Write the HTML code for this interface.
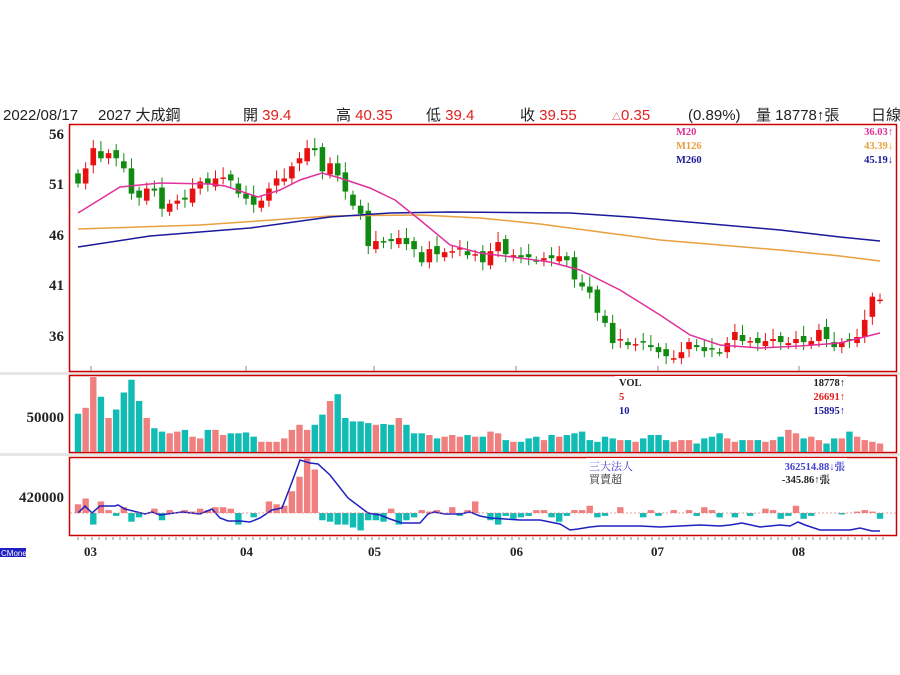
<!DOCTYPE html>
<html><head><meta charset="utf-8"><style>
body{margin:0;width:900px;height:675px;background:#fff;overflow:hidden;font-family:"Liberation Sans","Noto Sans CJK TC",sans-serif;}
svg{position:absolute;left:0;top:0}
.s{font-family:"Liberation Serif","Noto Serif CJK SC",serif;font-weight:bold}
</style></head><body>
<svg id="c" width="900" height="675" xmlns="http://www.w3.org/2000/svg">
<rect x="0" y="372" width="900" height="3" fill="#e6e6e6"/>
<rect x="0" y="453" width="900" height="3" fill="#e6e6e6"/>
<g font-size="15" fill="#222">
<text x="3" y="120">2022/08/17</text>
<text x="98" y="120">2027 大成鋼</text>
<text x="243" y="120">開 <tspan fill="#e02020">39.4</tspan></text>
<text x="336" y="120">高 <tspan fill="#e02020">40.35</tspan></text>
<text x="426" y="120">低 <tspan fill="#e02020">39.4</tspan></text>
<text x="520" y="120">收 <tspan fill="#e02020">39.55</tspan></text>
<text x="612" y="120" fill="#e02020"><tspan font-size="9">△</tspan>0.35</text>
<text x="688" y="120">(0.89%)</text>
<text x="756" y="120">量 18778↑張</text>
<text x="871" y="120">日線</text>
</g>
<rect x="69.5" y="124.5" width="827" height="247" fill="none" stroke="#c00" stroke-width="1.5"/>
<rect x="69.5" y="375.5" width="827" height="77" fill="none" stroke="#c00" stroke-width="1.5"/>
<rect x="69.5" y="457.5" width="827" height="78" fill="none" stroke="#c00" stroke-width="1.5"/>
<g class="s" font-size="15" fill="#222" text-anchor="end">
<text x="64" y="139">56</text><text x="64" y="189">51</text><text x="64" y="240">46</text><text x="64" y="290">41</text><text x="64" y="341">36</text>
<text x="64" y="422">50000</text><text x="64" y="502">420000</text>
</g>
<g class="s" font-size="13" fill="#222">
<text x="84" y="556">03</text><text x="240" y="556">04</text><text x="368" y="556">05</text><text x="510" y="556">06</text><text x="651" y="556">07</text><text x="792" y="556">08</text>
</g>
<rect x="0" y="548" width="26" height="9" fill="#2020c0"/><text x="1" y="556" font-size="8" fill="#fff">CMoney</text>
<g id="g"></g>
<polyline fill="none" stroke="#e8a040" stroke-width="1.5" points="78,229 200,225 330,216 420,215 480,218 540,224 600,232 660,240 720,245 780,250 840,256 880,261"/>
<polyline fill="none" stroke="#1a1a9a" stroke-width="1.5" points="78,247 150,236 250,228 330,217 390,213 450,212 570,213 630,217 700,223 780,230 840,237 880,241"/>
<polyline fill="none" stroke="#e0309a" stroke-width="1.5" points="78,213 120,187 160,183 210,184 225,186 258,197 280,190 300,180 322,173 340,178 370,188 395,200 420,220 450,245 480,253 520,258 550,262 580,270 620,290 660,315 690,335 720,345 760,348 800,346 840,343 860,338 880,333"/>
<polyline fill="none" stroke="#2020c0" stroke-width="1.5" points="78,513 85,506 92,513 100,506 115,506 118,505 125,509 145,514 152,512 160,515 182,512 200,514 212,509 220,518 228,521 240,521 250,522 260,518 272,510 282,508 292,482 300,460 310,463 318,464 330,475 348,498 368,513 380,515 390,519 402,523 420,523 428,514 434,512 445,514 460,514 470,512 480,516 490,518 520,520 540,520 560,524 570,530 578,529 590,527 600,526 615,526 630,526 640,526 660,527 680,526 700,525 720,526 730,525 742,523 760,527 780,525 790,526 798,522 805,525 820,530 840,530 850,530 860,528 872,531 880,531"/>
<line x1="70" y1="513" x2="896" y2="513" stroke="#e08080" stroke-width="0.7" stroke-dasharray="2,2"/>
<g class="s" font-size="10.5">
<rect x="673" y="126" width="222" height="40" fill="#fff" opacity="0.95"/>
<text x="676" y="135" fill="#e0309a">M20</text><text x="893" y="135" fill="#e0309a" text-anchor="end">36.03↑</text>
<text x="676" y="149" fill="#e8a040">M126</text><text x="893" y="149" fill="#e8a040" text-anchor="end">43.39↓</text>
<text x="676" y="163" fill="#1a1a9a">M260</text><text x="893" y="163" fill="#1a1a9a" text-anchor="end">45.19↓</text>
<rect x="615" y="376" width="232" height="42" fill="#fff" opacity="0.95"/>
<text x="619" y="386" fill="#222">VOL</text><text x="845" y="386" fill="#222" text-anchor="end">18778↑</text>
<text x="619" y="400" fill="#e02020">5</text><text x="845" y="400" fill="#e02020" text-anchor="end">26691↑</text>
<text x="619" y="414" fill="#1a1a9a">10</text><text x="845" y="414" fill="#1a1a9a" text-anchor="end">15895↑</text>
<rect x="586" y="458" width="261" height="28" fill="#fff" opacity="0.95"/>
<text x="589" y="470" fill="#4040d0" font-weight="normal" font-size="11">三大法人</text><text x="845" y="470" fill="#4040d0" text-anchor="end">362514.88↓張</text>
<text x="589" y="483" fill="#222" font-weight="normal" font-size="11">買賣超</text><text x="830" y="483" fill="#222" text-anchor="end">-345.86↑張</text>
</g>
</svg>
<script>
var C=[51,52.5,54.5,53.5,54,53.5,52.5,50,49.6,50.5,50.3,48.5,49,49.3,49.4,50.5,51.2,51,51.5,51.6,51.3,50,49.5,48.9,49.3,50.5,51.5,51.5,52.7,53.5,54.5,54.3,52.2,53,51.8,50.2,48.8,48,44.8,45.3,45.2,45.3,45.6,45,44.5,43.2,44.5,44,44.2,44.3,44.6,43.9,44,43.2,44.3,45.2,44,43.9,43.7,43.7,43.4,43.6,43.6,43.8,43.4,41.5,40.8,40.2,38.2,37.2,35.2,35.6,35,35.1,35.3,34.8,34.3,33.9,33.7,34.3,35.3,34.8,34.4,34.6,34.3,35.2,36.3,35.4,35.4,35.2,35.4,35.6,35.3,35.2,35.6,35.3,35.4,36.5,35.6,34.8,35.3,35.5,35.8,37.5,39.8,39.5];
var n=C.length,x0=78,dx=(880-x0)/(n-1),g='';
function Y(p){return 133+(56-p)*10.1}
var V=[45,52,90,65,40,50,70,85,60,40,28,24,22,24,26,18,16,26,26,20,22,22,23,18,12,12,12,16,26,32,26,32,44,60,68,40,36,36,34,32,33,32,40,32,22,22,20,16,18,20,18,20,18,18,24,22,14,12,12,16,18,14,20,18,20,22,24,14,12,18,16,14,14,12,16,20,20,14,12,14,14,10,16,18,22,16,12,14,14,14,12,14,18,26,22,16,18,14,10,16,16,24,18,14,12,10,12,10,12,12,14,48,42,16,18];
var I=[6,10,-8,8,2,-2,4,-6,-3,0,3,-5,2,0,2,1,3,2,4,4,3,-8,0,-3,0,8,6,5,15,25,38,30,-5,-6,-8,-8,-10,-12,-5,-5,-6,3,-8,-5,-3,2,1,2,0,4,-2,2,8,0,-5,-8,-2,-4,-3,-2,2,2,-3,-6,-2,2,2,5,-3,-2,0,4,0,0,-3,2,-2,0,2,0,2,-2,4,2,-3,0,-3,0,-2,0,3,2,-4,-2,5,-4,-2,0,0,0,-1,0,1,2,1,-4,-2,0,0,0,0,0];
for(var i=0;i<n;i++){var c=C[i],o=i?C[i-1]+(i%3-1)*0.3:c+1;var up=c>=o;var x=x0+i*dx;
var hi=Math.max(o,c)+0.4+(i%4)*0.2,lo=Math.min(o,c)-0.4-(i%3)*0.2;
var col=up?'#e81010':'#108a10';
g+='<line x1="'+x+'" x2="'+x+'" y1="'+Y(hi)+'" y2="'+Y(lo)+'" stroke="'+col+'" stroke-width="1"/>';
var t=Y(Math.max(o,c)),h=Math.max(1.5,Math.abs(o-c)*10.1);
g+='<rect x="'+(x-2.8)+'" y="'+t+'" width="5.6" height="'+h+'" fill="'+col+'"/>';
var v=V[i]||14,vc=up?'#f08080':'#10bcb4';
var vh=Math.min(75,v*0.85);
g+='<rect x="'+(x-3.2)+'" y="'+(452-vh)+'" width="6.4" height="'+vh+'" fill="'+vc+'"/>';
var q=(I[i]||0)*1.45;var ic=q>=0?'#f08080':'#10bcb4';
if(q!=0)g+='<rect x="'+(x-3.2)+'" y="'+(q>0?513-q:513)+'" width="6.4" height="'+Math.abs(q)+'" fill="'+ic+'"/>';
}
[91,246,374,516,658,799].forEach(function(x){g+='<line x1="'+x+'" x2="'+x+'" y1="366" y2="371" stroke="#888"/>';});
for(var x=78;x<885;x+=7)g+='<line x1="'+x+'" x2="'+x+'" y1="537" y2="540" stroke="#888"/>';
document.getElementById('g').innerHTML=g;
</script>
</body></html>
